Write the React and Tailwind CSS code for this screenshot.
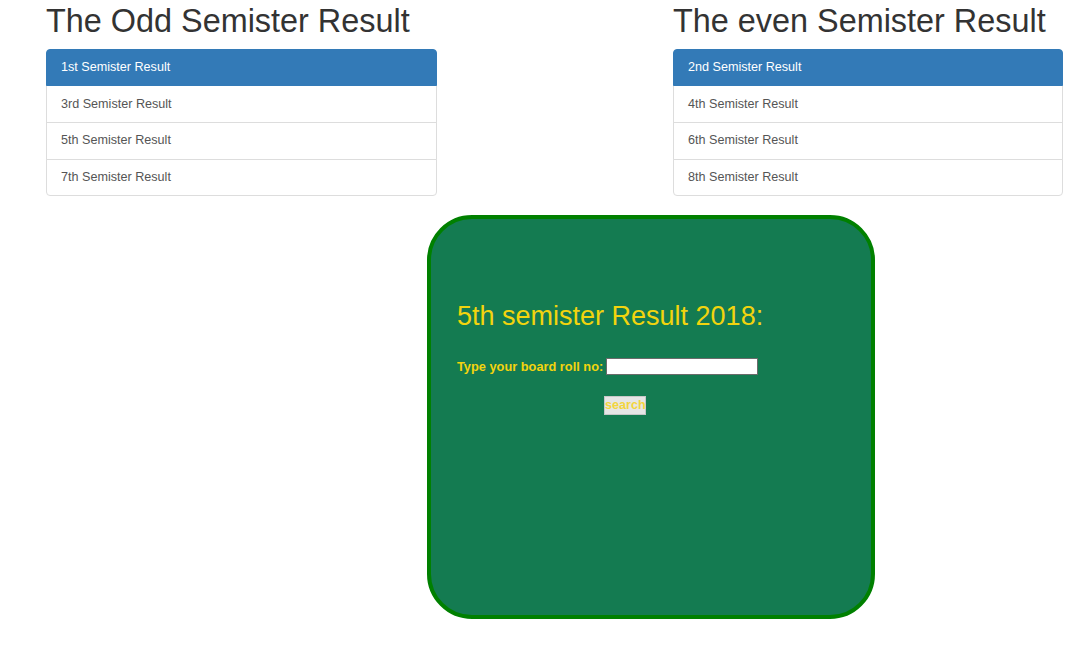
export default function App() {
  return (
    <div className="min-h-screen bg-white font-['Liberation_Sans',Arial,sans-serif]">
      <div className="flex pl-[46px] pt-[4px]">
        <ResultColumn
          className="w-[391px]"
          title="The Odd Semister Result"
          items={[
            "1st Semister Result",
            "3rd Semister Result",
            "5th Semister Result",
            "7th Semister Result",
          ]}
        />
        <ResultColumn
          className="ml-[236px] w-[390px]"
          title="The even Semister Result"
          items={[
            "2nd Semister Result",
            "4th Semister Result",
            "6th Semister Result",
            "8th Semister Result",
          ]}
        />
      </div>

      <div className="ml-[427px] mt-[19px] h-[404px] w-[448px] rounded-[45px] border-4 border-[#008000] bg-[#147b51] pl-[26px] pt-[83px]">
        <h2 className="text-[27px] leading-[1.1] text-[#f2d40e]">
          5th semister Result 2018:
        </h2>
        <div className="mt-[25px] flex items-center">
          <label className="text-[12.8px] font-bold text-[#f2d40e]">
            Type your board roll no:
          </label>
          <input
            type="text"
            className="ml-[3px] h-[17px] w-[152px] border border-[#6b6b6b] bg-white outline-none"
          />
        </div>
        <button className="ml-[147px] mt-[20px] h-[19px] w-[42px] border border-[#c8c8c8] bg-[#e6e6e6] text-[12.6px] font-bold leading-none text-[#f3d53c]">
          search
        </button>
      </div>
    </div>
  );
}

function ResultColumn({ className, title, items }) {
  return (
    <div className={className}>
      <h1 className="mb-[9px] text-[32.4px] leading-[1.1] text-[#333]">{title}</h1>
      <ul className="rounded-[4px]">
        {items.map((item, i) => (
          <li
            key={item}
            className={
              i === 0
                ? "relative z-10 flex h-[37.7px] items-center rounded-t-[4px] border border-[#337ab7] bg-[#337ab7] px-[14px] text-[12.6px] text-white"
                : i === items.length - 1
                ? "-mt-px flex h-[37.7px] items-center rounded-b-[4px] border border-[#ddd] bg-white px-[14px] text-[12.6px] text-[#555]"
                : "-mt-px flex h-[37.7px] items-center border border-[#ddd] bg-white px-[14px] text-[12.6px] text-[#555]"
            }
          >
            {item}
          </li>
        ))}
      </ul>
    </div>
  );
}
